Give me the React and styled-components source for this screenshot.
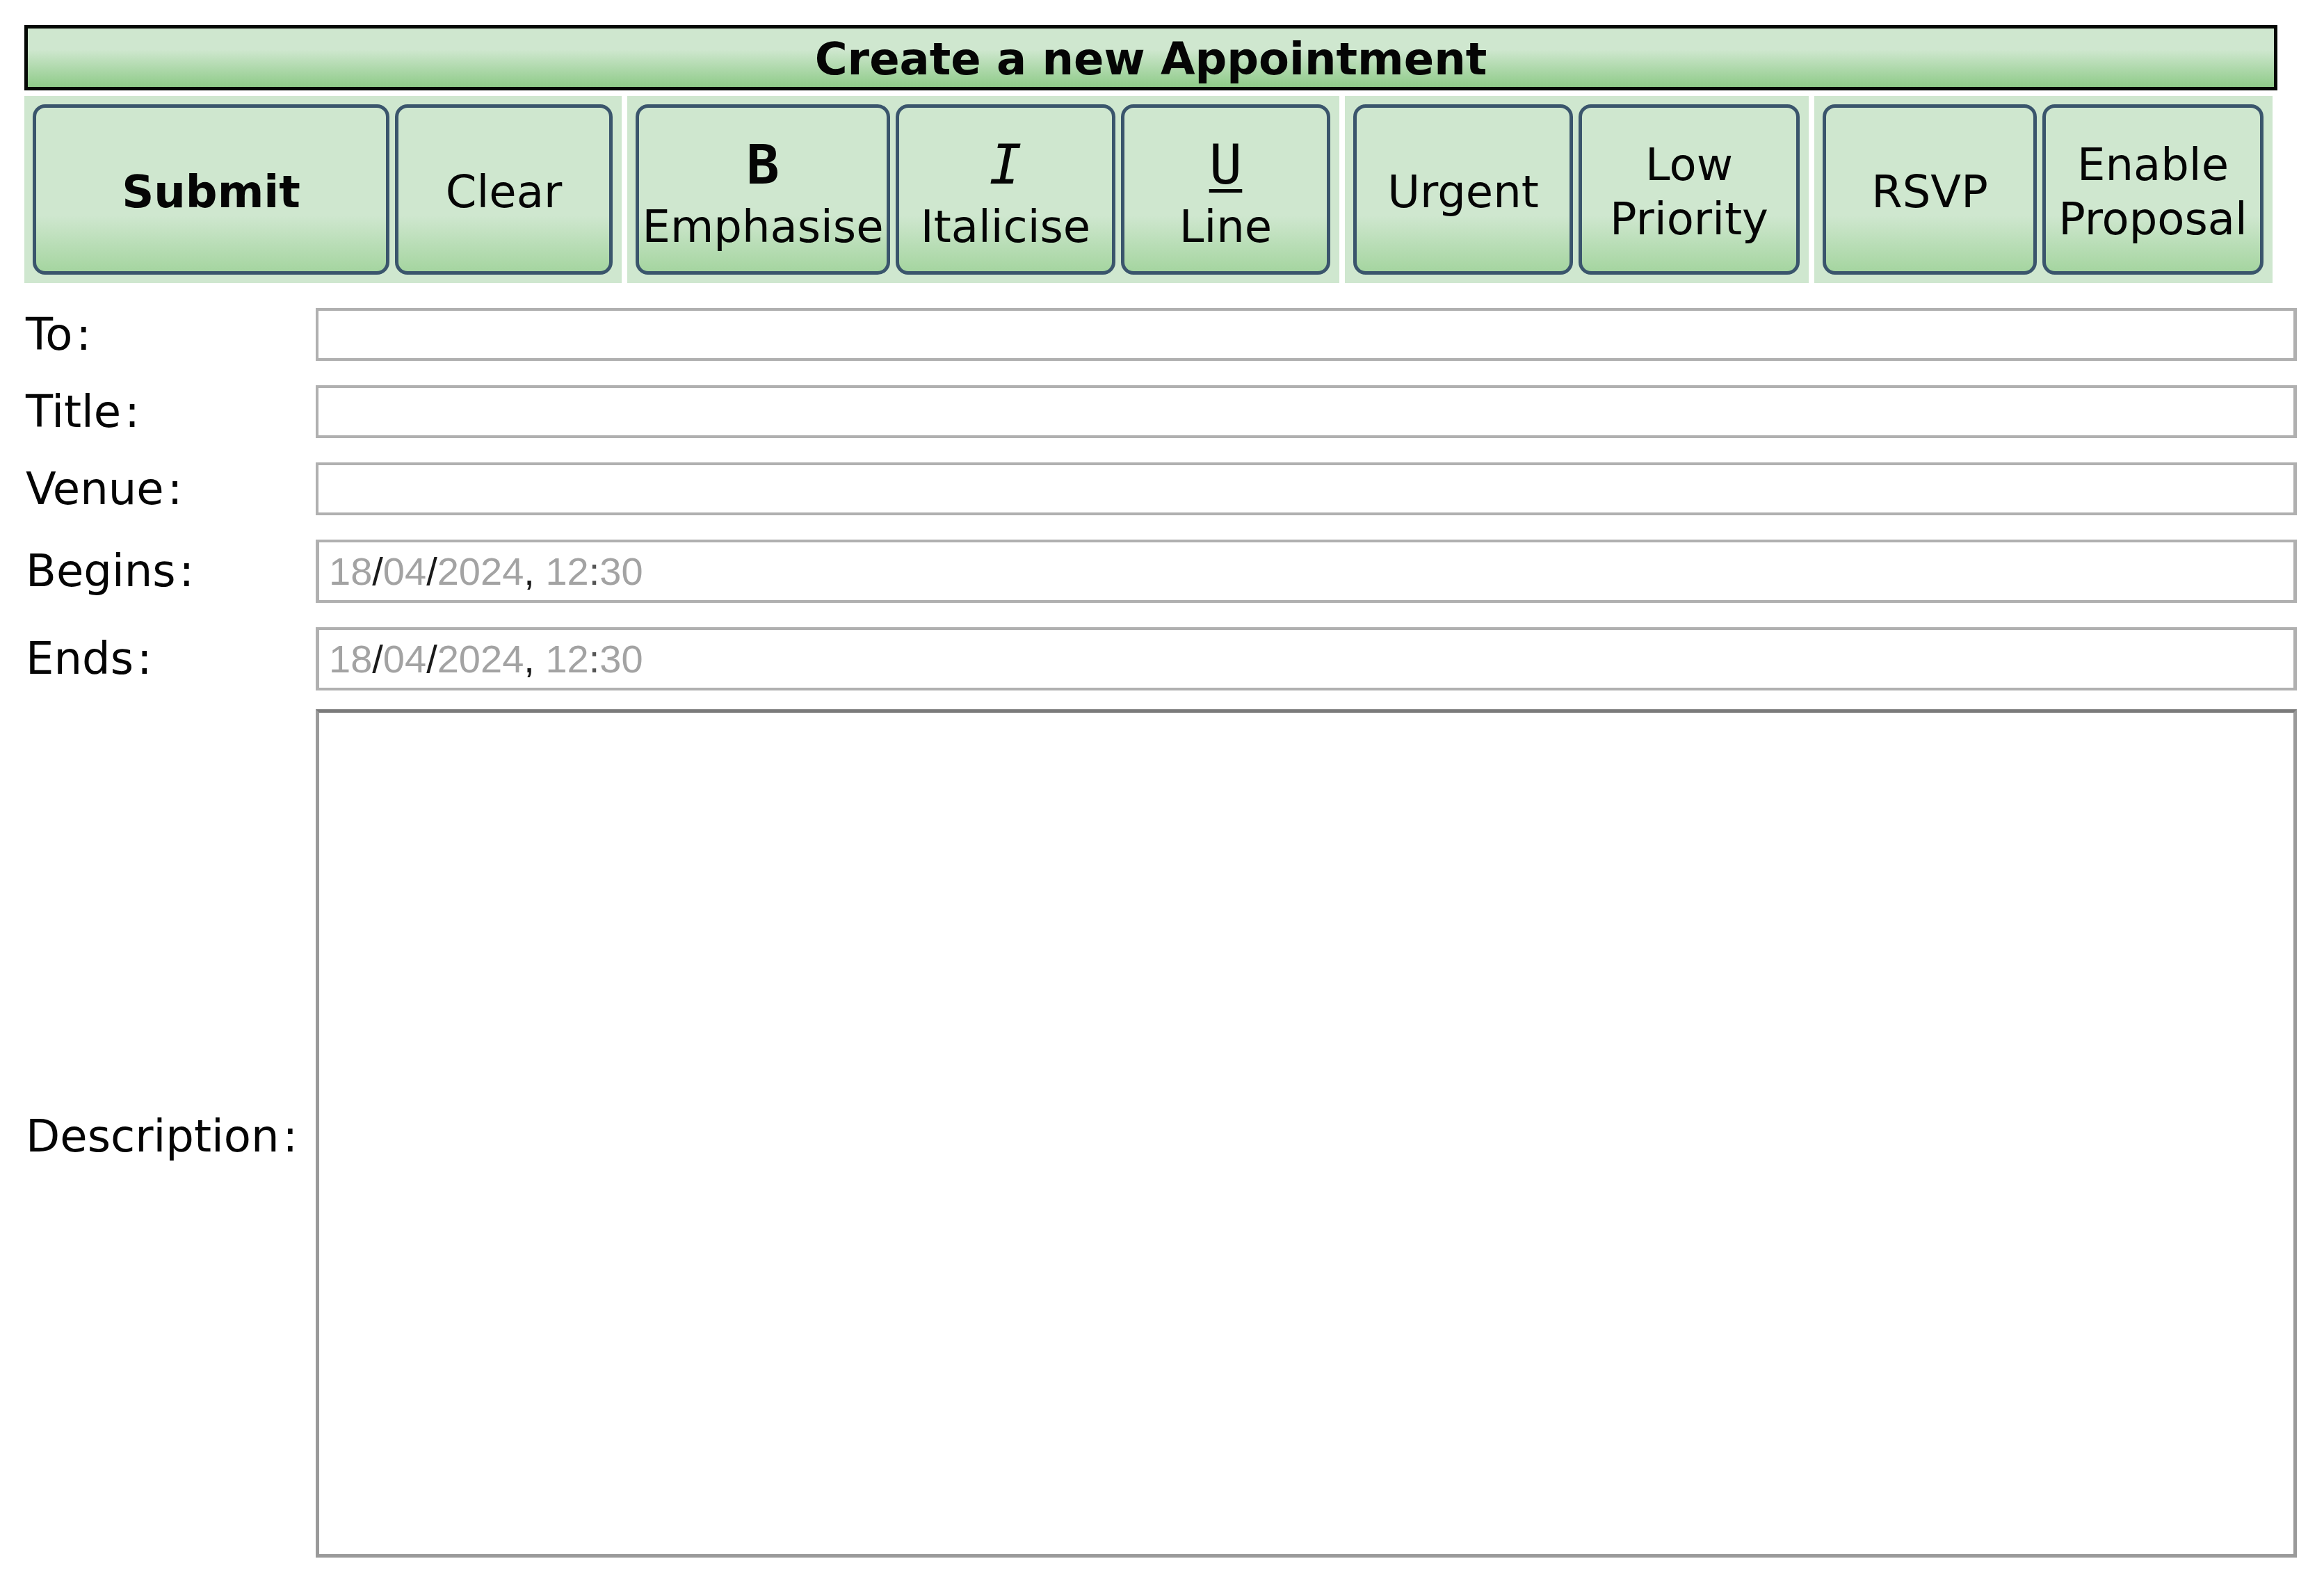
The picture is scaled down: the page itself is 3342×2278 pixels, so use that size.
import styled, { createGlobalStyle } from 'styled-components';

const GlobalStyle = createGlobalStyle`
    body {
        margin: 0;
        background: #ffffff;
        font-family: "DejaVu Sans", Verdana, sans-serif;
        color: #050505;
    }
`;

const Page = styled.div`
    padding: 36px 39px 40px 35px;
`;

const Header = styled.h1`
    box-sizing: border-box;
    width: 3240px;
    height: 94px;
    margin: 0;
    padding-top: 4px;
    border: 5px solid #050805;
    background: linear-gradient(#cfe7cf 36%, #8fcb89 100%);
    font-size: 64px;
    font-weight: bold;
    line-height: 80px;
    text-align: center;
`;

const Toolbar = styled.div`
    display: flex;
    gap: 8px;
    margin-top: 8px;
`;

const Group = styled.div`
    display: flex;
    gap: 8px;
    padding: 12px 13px 12px 12px;
    background: #cfe7cf;
`;

const ToolButton = styled.button`
    box-sizing: border-box;
    width: ${(p) => p.$width}px;
    height: 245px;
    padding: 8px 0 0;
    border: 5px solid #3a556c;
    border-radius: 18px;
    background: linear-gradient(#cfe7cf 66%, #a5d5a0 100%);
    font-family: "DejaVu Sans", Verdana, sans-serif;
    font-size: 64px;
    font-weight: ${(p) => (p.$bold ? 'bold' : 'normal')};
    line-height: 1.215;
    color: #050505;
    display: flex;
    flex-direction: column;
    align-items: center;
    justify-content: center;
    white-space: nowrap;
`;

const Glyph = styled.span`
    font-family: "DejaVu Sans Mono", monospace;
    font-size: 79px;
    line-height: 1.27;
    font-weight: ${(p) => (p.$kind === 'bold' ? 'bold' : 'normal')};
    font-style: ${(p) => (p.$kind === 'italic' ? 'italic' : 'normal')};
    text-decoration: ${(p) => (p.$kind === 'underline' ? 'underline' : 'none')};
    text-decoration-thickness: 5px;
    text-underline-offset: 8px;
`;

const Form = styled.div`
    display: grid;
    grid-template-columns: 419px 2849px;
    row-gap: 35px;
    align-items: center;
    margin-top: 36px;
`;

const Label = styled.label`
    padding-left: 2px;
    font-size: 64px;
    line-height: 1.164;
`;

const Colon = styled.span`
    padding: 0 3px 0 5px;
`;

const TextInput = styled.input`
    box-sizing: border-box;
    width: 100%;
    height: 76px;
    margin: 0;
    border: 4px solid #b0b0b0;
    border-right-width: 5px;
    background: #ffffff;
    outline: none;
`;

const DateBox = styled.div`
    box-sizing: border-box;
    height: 91px;
    padding-left: 14px;
    border: 4px solid #b0b0b0;
    border-left-width: 5px;
    border-right-width: 5px;
    display: flex;
    align-items: center;
    font-family: "Liberation Sans", Arial, sans-serif;
    font-size: 56px;
    color: #a3a3a3;
    white-space: pre;
`;

const Sep = styled.span`
    color: ${(p) => p.$tone};
`;

const TextArea = styled.textarea`
    box-sizing: border-box;
    width: 100%;
    height: 1220px;
    margin: -8px 0 0;
    border: 5px solid #9a9a9a;
    border-top-color: #7a7a7a;
    resize: none;
    outline: none;
`;

const buttonGroups = [
    [
        { key: 'submit', width: 513, bold: true, lines: ['Submit'] },
        { key: 'clear', width: 313, lines: ['Clear'] },
    ],
    [
        { key: 'em', width: 366, glyph: 'B', kind: 'bold', lines: ['Emphasise'] },
        { key: 'it', width: 316, glyph: 'I', kind: 'italic', lines: ['Italicise'] },
        { key: 'ul', width: 301, glyph: 'U', kind: 'underline', lines: ['Line'] },
    ],
    [
        { key: 'urgent', width: 316, lines: ['Urgent'] },
        { key: 'low', width: 318, lines: ['Low', 'Priority'] },
    ],
    [
        { key: 'rsvp', width: 308, lines: ['RSVP'] },
        { key: 'proposal', width: 318, lines: ['Enable', 'Proposal'] },
    ],
];

const fields = ['To', 'Title', 'Venue'];

const DateField = () => (
    <DateBox>
        18<Sep $tone="#1a1a1a">/</Sep>04<Sep $tone="#1a1a1a">/</Sep>2024
        <Sep $tone="#1a1a1a">, </Sep>12<Sep $tone="#555555">:</Sep>30
    </DateBox>
);

const FieldLabel = ({ text }) => (
    <Label>
        {text}
        <Colon>:</Colon>
    </Label>
);

const App = () => {
    return (
        <Page>
            <GlobalStyle />
            <Header>Create a new Appointment</Header>

            <Toolbar>
                {buttonGroups.map((group, i) => (
                    <Group key={i}>
                        {group.map((b) => (
                            <ToolButton key={b.key} type="button" $width={b.width} $bold={b.bold}>
                                {b.glyph && <Glyph $kind={b.kind}>{b.glyph}</Glyph>}
                                {b.lines.map((line) => (
                                    <span key={line}>{line}</span>
                                ))}
                            </ToolButton>
                        ))}
                    </Group>
                ))}
            </Toolbar>

            <Form>
                {fields.map((f) => [
                    <FieldLabel key={f + '-l'} text={f} />,
                    <TextInput key={f + '-i'} type="text" />,
                ])}

                <FieldLabel text="Begins" />
                <DateField />

                <FieldLabel text="Ends" />
                <DateField />

                <FieldLabel text="Description" />
                <TextArea />
            </Form>
        </Page>
    );
};

export default App;
